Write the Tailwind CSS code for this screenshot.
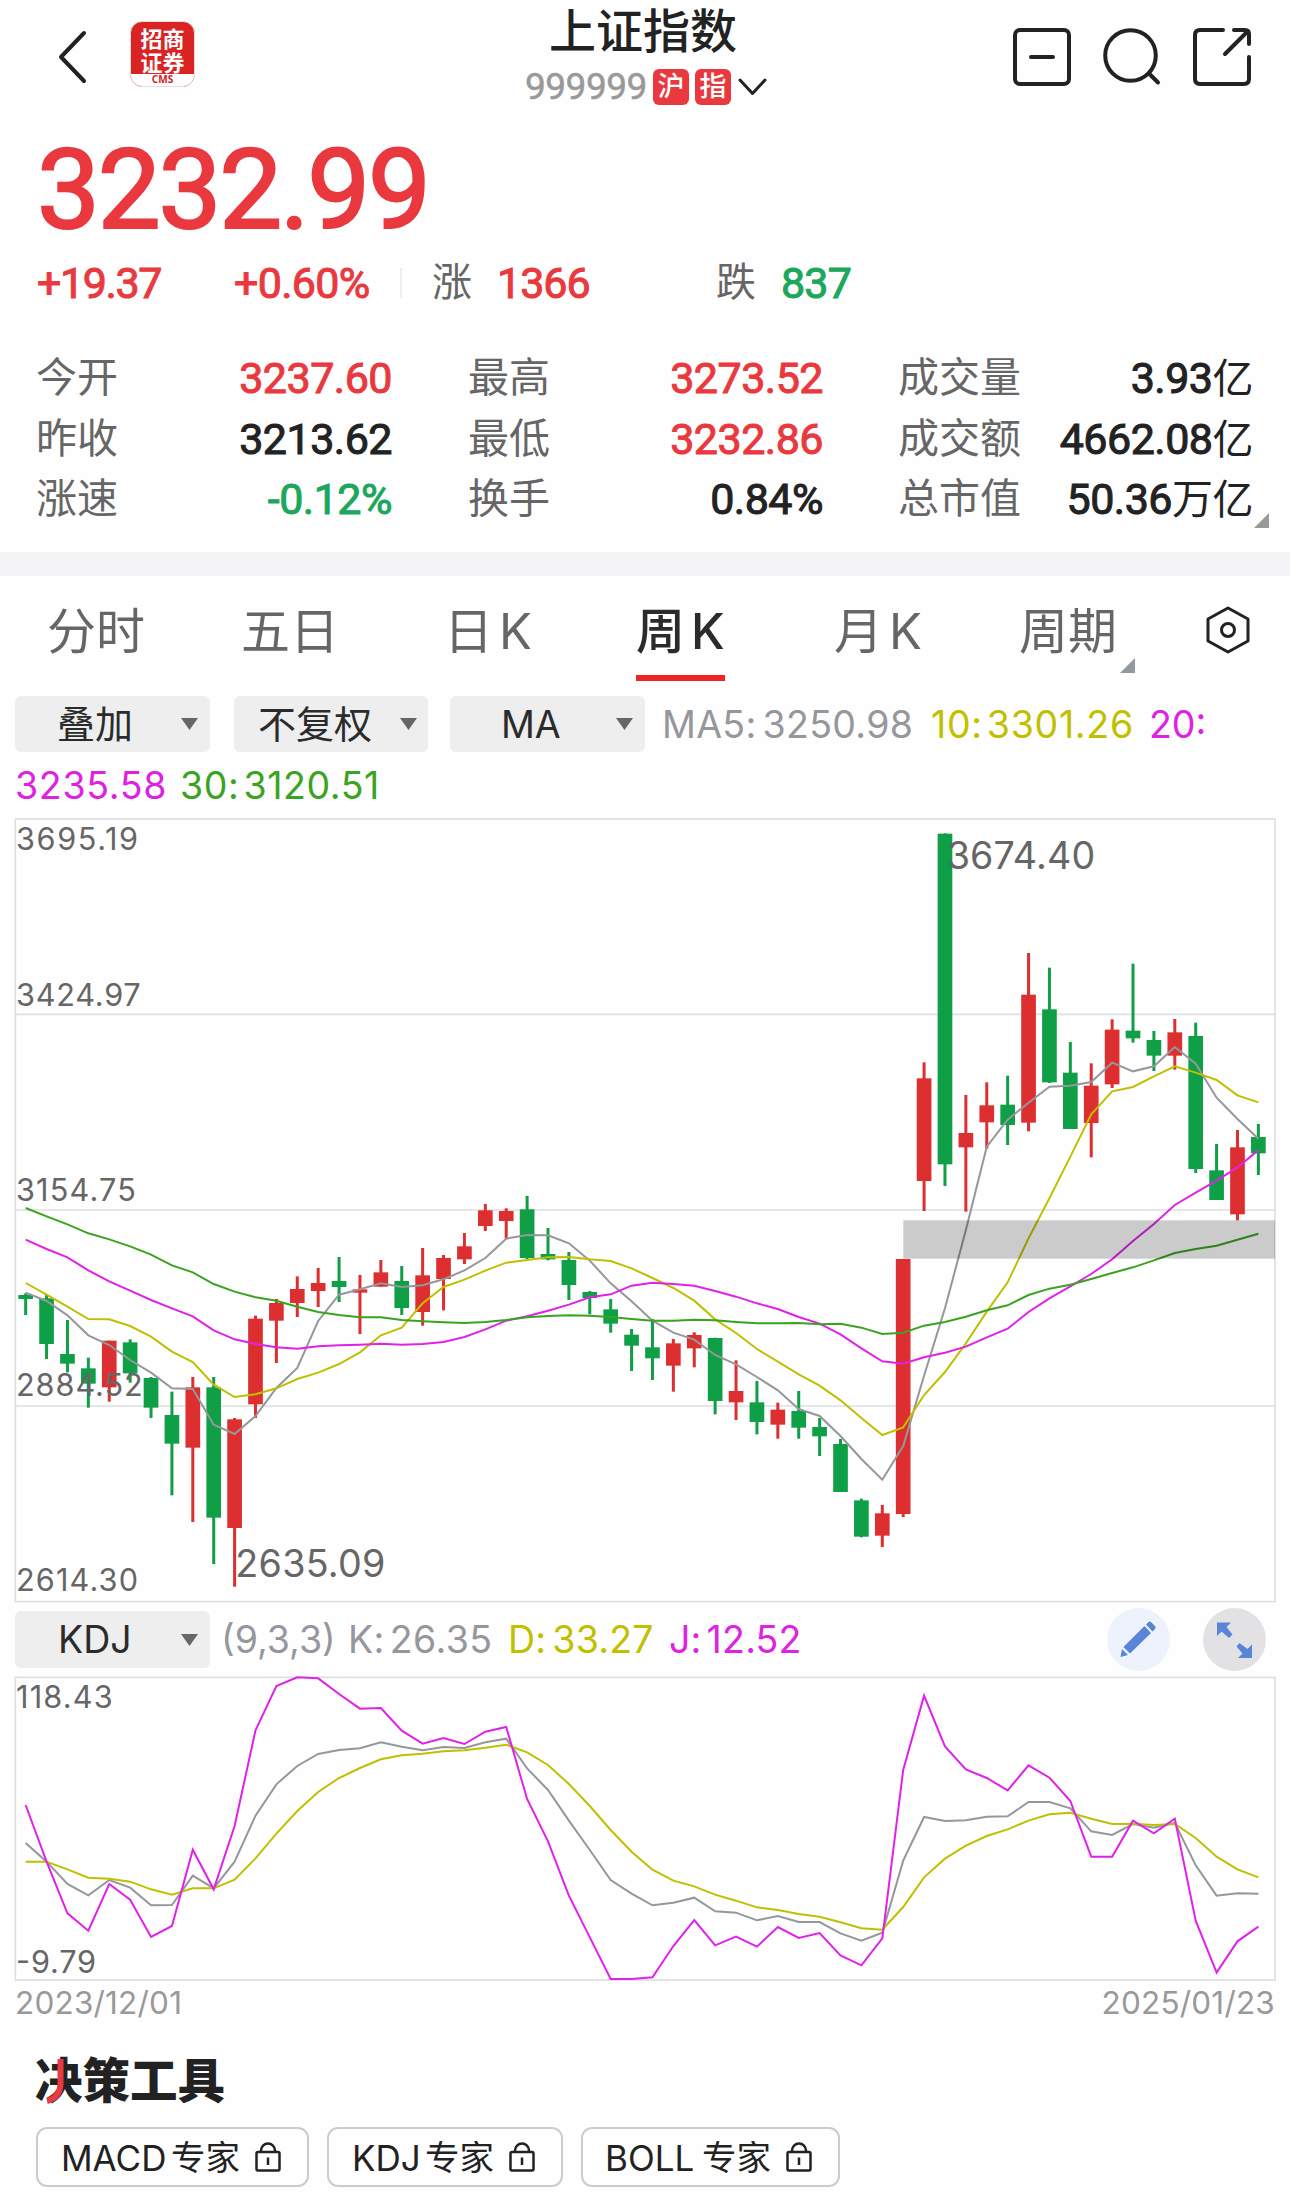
<!DOCTYPE html>
<html lang="zh-CN">
<head>
  <meta charset="UTF-8" />
  <meta name="viewport" content="width=device-width, initial-scale=1.0" />
  <title>上证指数</title>
  <script src="https://cdn.jsdelivr.net/npm/@tailwindcss/browser@4"></script>
</head>
<body class="w-[1290px] h-[2207px] overflow-hidden bg-[#fefefe] text-[#222] font-[Inter,'Noto_Sans_CJK_SC',sans-serif] whitespace-nowrap">

  <!-- Header -->
  <header class="h-[120px] flex items-start">
    <svg class="w-[30px] h-[54px] mt-[30px] ml-[58px]" viewBox="0 0 30 54" fill="none" stroke="#222" stroke-width="4" stroke-linecap="round" stroke-linejoin="round">
      <path d="M26 3 3 27 26 51" />
    </svg>
    <div class="w-[65px] h-[66px] mt-[21px] ml-[42px] rounded-[12px] bg-[#da2323] overflow-hidden border border-[#eadcdc] flex flex-col items-center">
      <div class="h-[53px] pt-[3px] text-[22px] leading-[24px] font-bold text-white font-['Noto_Sans_CJK_SC',sans-serif] text-center">招商<br />证券</div>
      <div class="w-full h-[12px] bg-white text-[#d42020] text-[10px] leading-[10px] font-bold text-center font-['Open_Sans',sans-serif]">CMS</div>
    </div>

    <div class="ml-[330px] w-[250px]">
      <h1 class="pl-[24px] mt-[3px] h-[61px] text-[47px] leading-[56px] font-medium">上证指数</h1>
      <div class="flex items-center h-[46px]">
        <span class="w-[128px] text-[37px] leading-[46px] tracking-[-0.500px] text-[#999] font-[Roboto,sans-serif] [-webkit-text-stroke:0.5px]">999999</span>
        <span class="size-[36px] rounded-[6px] bg-[#e9393e] text-white text-[27px] leading-[35px] text-center font-medium">沪</span>
        <span class="ml-[6px] size-[36px] rounded-[6px] bg-[#e9393e] text-white text-[27px] leading-[35px] text-center font-medium">指</span>
        <svg class="ml-[7px] w-[29px] h-[18px]" viewBox="0 0 29 18" fill="none" stroke="#222" stroke-width="3" stroke-linecap="round" stroke-linejoin="round">
          <path d="M2 2 14.500 15.500 27 2" />
        </svg>
      </div>
    </div>

    <div class="ml-[236px] mt-[26px] flex">
      <svg class="w-[62px] h-[62px]" viewBox="0 0 62 62" fill="none" stroke="#222" stroke-width="4" stroke-linecap="round">
        <rect x="4" y="4" width="54" height="54" rx="5" />
        <path d="M20 31H42" />
      </svg>
      <svg class="ml-[28px] w-[62px] h-[62px]" viewBox="0 0 62 62" fill="none" stroke="#222" stroke-width="4" stroke-linecap="round">
        <circle cx="29.500" cy="29.500" r="25.300" />
        <path d="M48 47.500 57 56.500" />
      </svg>
      <svg class="ml-[28px] w-[62px] h-[62px]" viewBox="0 0 62 62" fill="none" stroke="#222" stroke-width="4" stroke-linecap="round" stroke-linejoin="round">
        <path d="M32 4H9Q4 4 4 9V53Q4 58 9 58H53Q58 58 58 53V31M43 4H54Q58 4 58 8V18M56 6 34 28" />
      </svg>
    </div>
  </header>

  <!-- Quote -->
  <section class="relative h-[432px] font-[Roboto,'Noto_Sans_CJK_SC',sans-serif]">
    <div class="h-[135px] pt-[2px] pl-[37px] text-[112px] leading-[135px] tracking-[-2.200px] text-[#e9393e] [-webkit-text-stroke:2.2px]">3232.99</div>
    <div class="h-[56px] flex items-center text-[43px] leading-[56px]">
      <span class="ml-[37px] w-[197px] tracking-[-1.400px] text-[#e9393e] [-webkit-text-stroke:1px]">+19.37</span>
      <span class="w-[166px] tracking-[-0.700px] text-[#e9393e] [-webkit-text-stroke:1px]">+0.60%</span>
      <span class="w-[2px] h-[30px] bg-[#eee]"></span>
      <span class="ml-[30px] w-[65px] text-[40px] text-[#666]">涨</span>
      <span class="w-[219px] tracking-[-1px] text-[#e9393e] [-webkit-text-stroke:1px]">1366</span>
      <span class="w-[65px] text-[40px] text-[#666]">跌</span>
      <span class="tracking-[-0.800px] text-[#1ba75c] [-webkit-text-stroke:1px]">837</span>
    </div>
    <div id="quotes" class="pt-[37px] pl-[36px] grid grid-cols-[90px_266px_76px_90px_265px_75px_123px_232px] auto-rows-[60.500px] text-[43px] leading-[60px]"></div>
    <svg class="absolute left-[1254px] top-[393px] w-[15px] h-[15px]" viewBox="0 0 15 15"><path d="M15 0V15H0Z" fill="#999" /></svg>
  </section>
  <div class="h-[24px] bg-[#f3f3f5]"></div>

  <!-- Period tabs -->
  <nav class="relative h-[112px] text-[49px] leading-[112px] text-[#666] grid grid-cols-[194px_203px_192px_198px_185px_186px_50px] pl-[47px]">
    <span>分时</span>
    <span>五日</span>
    <span>日<span class="ml-[6px]">K</span></span>
    <span class="text-[#2b2b2b] font-medium">周<span class="ml-[6px]">K</span></span>
    <span>月<span class="ml-[6px]">K</span></span>
    <span>周期</span>
    <svg class="mt-[30px] w-[46px] h-[48px]" viewBox="0 0 46 48" fill="none" stroke="#222" stroke-width="3" stroke-linejoin="round">
      <path d="M23 2 43 13V35L23 46 3 35V13Z" />
      <circle cx="23" cy="24" r="6.500" />
    </svg>
    <i class="absolute left-[636px] top-[99px] w-[89px] h-[6px] bg-[#ec2424]"></i>
    <svg class="absolute left-[1120px] top-[82px] w-[15px] h-[15px]" viewBox="0 0 15 15"><path d="M15 0V15H0Z" fill="#9499a0" /></svg>
  </nav>

  <!-- Moving averages -->
  <div class="h-[130px] pl-[15px] pt-[8px] text-[37.500px]">
    <div class="h-[56px] flex items-center leading-[56px]">
      <div class="w-[195px] h-[56px] rounded-[6px] bg-[#eee] flex items-center pl-[42px] text-[#2b2b2b]">
        <span class="w-[124px] text-[38px]">叠加</span>
        <svg class="w-[17px] h-[12px]" viewBox="0 0 17 12"><path d="M0 0H17L8.500 12Z" fill="#666" /></svg>
      </div>
      <div class="ml-[24px] w-[194px] h-[56px] rounded-[6px] bg-[#eee] flex items-center pl-[24px] text-[#2b2b2b]">
        <span class="w-[142px] text-[38px]">不复权</span>
        <svg class="w-[17px] h-[12px]" viewBox="0 0 17 12"><path d="M0 0H17L8.500 12Z" fill="#666" /></svg>
      </div>
      <div class="ml-[22px] w-[195px] h-[56px] rounded-[6px] bg-[#eee] flex items-center pl-[51px] text-[#2b2b2b]">
        <span class="w-[115px] pt-[1px]">MA</span>
        <svg class="w-[17px] h-[12px]" viewBox="0 0 17 12"><path d="M0 0H17L8.500 12Z" fill="#666" /></svg>
      </div>
      <span class="ml-[17px] w-[269px] pt-[1px] tracking-[0.300px] text-[#96979c]">MA5:<span class="ml-[6px]">3250.98</span></span>
      <span class="w-[218px] pt-[1px] tracking-[0.700px] text-[#c0bf00]">10:<span class="ml-[4px]">3301.26</span></span>
      <span class="pt-[1px] text-[#dd22e4]">20:</span>
    </div>
    <div class="mt-[6px] flex leading-[56px]">
      <span class="w-[165px] tracking-[0.700px] text-[#dd22e4]">3235.58</span>
      <span class="tracking-[0.600px] text-[#3aa320]">30:<span class="ml-[4px]">3120.51</span></span>
    </div>
  </div>

  <!-- Candles -->
  <svg id="kline" class="block w-[1290px] h-[786px]" viewBox="0 -6 3870 2358" fill="none"></svg>

  <!-- KDJ toolbar -->
  <div class="h-[70px] pl-[15px] pt-[4px] flex items-start text-[37.500px] leading-[56px]">
    <div class="mt-[3px] w-[195px] h-[57px] rounded-[6px] bg-[#eee] flex items-center pl-[43px] text-[#2b2b2b]">
      <span class="w-[123px]">KDJ</span>
      <svg class="w-[17px] h-[12px]" viewBox="0 0 17 12"><path d="M0 0H17L8.500 12Z" fill="#666" /></svg>
    </div>
    <div class="mt-[4px] flex">
      <span class="ml-[11px] w-[127px] text-[#96979c]">(9,3,3)</span>
      <span class="w-[160px] tracking-[0.400px] text-[#96979c]">K:<span class="ml-[5px]">26.35</span></span>
      <span class="w-[161px] tracking-[0.200px] text-[#c0bf00]">D:<span class="ml-[6px]">33.27</span></span>
      <span class="w-[438px] tracking-[0.200px] text-[#dd22e4]">J:<span class="ml-[5px]">12.52</span></span>
    </div>
    <svg class="w-[63px] h-[63px]" viewBox="0 0 63 63">
      <circle cx="31.500" cy="31.500" r="31.500" fill="#edf2fc" />
      <path d="M39 16.500 41.500 14Q43 13 44.500 14.500L48 18Q49.500 19.500 48 21L45.500 23.500ZM37.500 18 44 25 23 45.500 16.500 39ZM15 41 21 47 13.500 49Z" fill="#5885d8" />
    </svg>
    <svg class="ml-[33px] w-[63px] h-[63px]" viewBox="0 0 63 63">
      <circle cx="31.500" cy="31.500" r="31.500" fill="#e2e2e4" />
      <path d="M14 14.500H28L23.500 19 29.500 26.500 26 30 18.500 23.500 14 28ZM49 50H35L39.500 45.500 33.500 38.500 36.500 35 44.500 41 49 36.500Z" fill="#5885d8" />
    </svg>
  </div>

  <svg id="kdj" class="block w-[1290px] h-[306px]" viewBox="0 10 3870 918" fill="none" overflow="visible"></svg>

  <div class="h-[52px] pt-[2px] pl-[15px] pr-[15px] flex justify-between text-[31.500px] leading-[42px] text-[#999]">
    <span class="tracking-[0.200px]">2023/12/01</span>
    <span class="tracking-[0.200px]">2025/01/23</span>
  </div>

  <!-- Tools -->
  <section class="relative pt-[15px]">
    <h2 class="pl-[35px] h-[80px] text-[47.500px] leading-[67px] font-black">决策工具</h2>
    <svg class="absolute left-[44px] top-[26px] w-[24px] h-[48px]" viewBox="0 0 24 48" fill="none" stroke="#ea3a40" stroke-width="6">
      <path d="M16.500 1V26Q16 40 3 43" />
    </svg>
    <div class="flex pl-[36px] text-[35px] leading-[56px]">
      <div class="w-[273px] h-[60px] border-2 border-[#ccc] rounded-[11px] flex items-center pl-[23px]">
        <span class="w-[110px] pt-[1px]">MACD</span><span class="w-[84px] pt-[1px] text-[34.500px]">专家</span>
        <svg class="w-[26px] h-[30px]" viewBox="0 0 26 30" fill="none" stroke="#222" stroke-width="2.500"><rect x="1.500" y="10" width="23" height="18.500" rx="1.500" /><path d="M6 10V8.500A7 7 0 0 1 20 8.500V10M13 15.500V23" /></svg>
      </div>
      <div class="ml-[18px] w-[236px] h-[60px] border-2 border-[#ccc] rounded-[11px] flex items-center pl-[23px]">
        <span class="w-[73px] pt-[1px]">KDJ</span><span class="w-[84px] pt-[1px] text-[34.500px]">专家</span>
        <svg class="w-[26px] h-[30px]" viewBox="0 0 26 30" fill="none" stroke="#222" stroke-width="2.500"><rect x="1.500" y="10" width="23" height="18.500" rx="1.500" /><path d="M6 10V8.500A7 7 0 0 1 20 8.500V10M13 15.500V23" /></svg>
      </div>
      <div class="ml-[18px] w-[259px] h-[60px] border-2 border-[#ccc] rounded-[11px] flex items-center pl-[22px]">
        <span class="w-[97px] pt-[1px]">BOLL</span><span class="w-[84px] pt-[1px] text-[34.500px]">专家</span>
        <svg class="w-[26px] h-[30px]" viewBox="0 0 26 30" fill="none" stroke="#222" stroke-width="2.500"><rect x="1.500" y="10" width="23" height="18.500" rx="1.500" /><path d="M6 10V8.500A7 7 0 0 1 20 8.500V10M13 15.500V23" /></svg>
      </div>
    </div>
  </section>

  <script>
    const RED = "text-[#e9393e]", GREEN = "text-[#1ba75c]", BLACK = "text-[#222]";
    const quotes = [
      ["今开", "3237.60", RED], ["最高", "3273.52", RED], ["成交量", "3.93亿", BLACK],
      ["昨收", "3213.62", BLACK], ["最低", "3232.86", RED], ["成交额", "4662.08亿", BLACK],
      ["涨速", "-0.12%", GREEN], ["换手", "0.84%", BLACK], ["总市值", "50.36万亿", BLACK]
    ];
    document.getElementById("quotes").innerHTML = quotes.map(([label, value, color], i) => `
      <span class="text-[41px] text-[#666]">${label}</span>
      <span class="text-right tracking-[-0.500px] [-webkit-text-stroke:1px] ${color}">${value.replace(/[万亿]+/, '<span class="text-[41px] [-webkit-text-stroke:0px]">$&</span>')}</span>
      ${i % 3 < 2 ? "<span></span>" : ""}`).join("");

    // chart units are thirds of a pixel
    const cx = i => 77 + i * 62.68;
    const line = (ys, color) =>
      `<polyline points="${ys.map((y, i) => `${cx(i).toFixed(1)},${y}`).join(" ")}" stroke="${color}" stroke-width="6" />`;
    const label = (x, y, len, text, size = 92) =>
      `<text x="${x}" y="${y}" textLength="${len}" font-size="${size}" fill="#666">${text}</text>`;

    // [top, bottom, high, low, up]
    const candles = [
      [1425,1437,1420,1485,0],[1435,1572,1425,1617,0],[1602,1631,1500,1657,0],[1645,1691,1613,1763,0],[1562,1702,1562,1745,1],
      [1567,1660,1558,1688,0],[1674,1763,1671,1794,0],[1785,1871,1715,2026,0],[1702,1883,1671,2106,1],[1702,2093,1671,2232,0],
      [1798,2124,1794,2300,1],[1496,1753,1487,1794,1],[1449,1502,1437,1629,1],[1407,1449,1369,1491,1],[1389,1413,1344,1461,1],
      [1383,1401,1311,1446,0],[1408,1418,1365,1542,1],[1357,1400,1320,1400,1],[1383,1464,1338,1485,0],[1366,1476,1284,1517,1],
      [1314,1377,1305,1471,1],[1279,1318,1239,1332,1],[1171,1218,1152,1233,1],[1173,1203,1165,1256,1],[1168,1314,1128,1317,0],
      [1302,1318,1224,1321,0],[1320,1395,1296,1440,0],[1416,1434,1413,1483,0],[1468,1511,1437,1538,0],[1544,1577,1527,1653,0],
      [1582,1615,1497,1680,0],[1570,1637,1557,1715,1],[1545,1585,1537,1642,1],[1554,1743,1553,1783,0],[1713,1747,1621,1800,1],
      [1747,1806,1683,1843,0],[1769,1814,1748,1856,1],[1773,1823,1713,1856,0],[1821,1849,1794,1908,0],[1872,2016,1857,2016,0],
      [2041,2150,2036,2152,0],[2080,2147,2055,2181,1],[1317,2082,1317,2091,1],[775,1083,727,1173,1],[41,1033,40,1098,0],
      [939,982,825,1175,1],[856,907,787,986,1],[854,915,767,975,0],[524,908,399,934,1],[568,787,443,789,0],
      [758,927,666,927,0],[797,909,730,1012,1],[629,793,598,804,1],[632,655,431,668,0],[660,707,633,753,0],
      [637,707,597,749,1],[648,1047,608,1059,0],[1051,1140,972,1140,0],[982,1183,930,1201,1],[951,1000,912,1065,0]
    ];
    const ma5 = [1418,1443,1486,1546,1575,1620,1658,1705,1707,1814,1842,1788,1704,1644,1503,1424,1408,1390,1401,1396,1378,1351,1314,1256,1245,1246,1270,1322,1390,1444,1502,1538,1559,1605,1633,1671,1711,1767,1788,1848,1917,1979,1878,1667,1465,1230,980,899,848,800,797,786,728,754,739,681,731,833,897,956];
    const ma10 = [1389,1424,1460,1497,1498,1518,1550,1595,1626,1694,1731,1723,1705,1677,1658,1632,1597,1546,1523,1450,1401,1379,1352,1328,1320,1312,1311,1318,1323,1345,1374,1404,1442,1498,1539,1587,1625,1663,1697,1741,1794,1845,1822,1725,1656,1570,1475,1387,1255,1135,1010,883,814,801,769,739,758,780,826,847];
    const ma20 = [1259,1287,1312,1351,1384,1412,1440,1465,1489,1531,1558,1572,1582,1586,1579,1576,1574,1571,1574,1572,1566,1551,1528,1502,1489,1472,1454,1432,1423,1397,1388,1392,1397,1413,1430,1450,1467,1491,1511,1543,1585,1624,1631,1612,1598,1580,1552,1526,1476,1435,1399,1362,1318,1263,1212,1155,1118,1082,1042,991];
    const ma30 = [1164,1189,1213,1240,1258,1279,1304,1336,1357,1392,1415,1432,1442,1460,1476,1485,1492,1492,1500,1504,1507,1509,1506,1500,1492,1488,1486,1487,1491,1497,1502,1502,1499,1501,1506,1510,1510,1509,1513,1511,1523,1542,1538,1517,1506,1490,1471,1456,1425,1406,1394,1377,1359,1342,1321,1299,1287,1277,1259,1241];

    document.getElementById("kline").innerHTML =
      `<rect x="46" y="-3" width="3779" height="2348" stroke="#dedfe0" stroke-width="5" />` +
      [583, 1170, 1758].map(y => `<path d="M46 ${y}H3825" stroke="#dedfe0" stroke-width="5" />`).join("") +
      candles.map(([top, bottom, high, low, up], i) => {
        const x = cx(i), fill = up ? "#dd2e30" : "#0f9f46";
        return `<rect x="${x - 22}" y="${top}" width="44" height="${bottom - top}" fill="${fill}" />` +
          `<rect x="${x - 4.5}" y="${high}" width="9" height="${low - high}" fill="${fill}" />`;
      }).join("") +
      line(ma5, "#96979c") + line(ma10, "#c0bf00") + line(ma20, "#e022e8") + line(ma30, "#3aa320") +
      `<rect x="2710" y="1201" width="1115" height="115" fill="#000" fill-opacity="0.2" />` +
      label(48, 91, 366, "3695.19") + label(48, 558, 374, "3424.97") + label(48, 1144, 360, "3154.75") +
      label(48, 1729, 380, "2884.52") + label(48, 2314, 366, "2614.30") +
      label(2840, 148, 446, "3674.40", 113) + label(706, 2271, 450, "2635.09", 113);

    const k = [517,573,640,674,628,651,704,703,615,653,573,435,341,286,250,238,233,215,228,239,229,232,215,204,293,358,450,538,628,669,704,696,681,722,726,749,736,754,754,788,810,786,570,439,451,449,438,437,394,394,413,482,493,460,471,457,584,675,668,669];
    const d = [573,573,596,621,624,633,656,672,653,653,627,563,489,421,364,322,292,266,254,249,242,239,231,222,245,283,340,406,478,543,597,630,647,672,690,710,718,730,738,755,773,777,709,620,564,525,496,476,450,431,426,444,460,459,463,460,502,558,596,620];
    const j = [403,573,728,780,640,687,799,766,537,656,466,179,46,20,23,70,114,112,180,219,202,220,183,169,385,512,675,800,925,925,920,826,748,824,798,828,769,802,787,854,884,803,298,75,227,296,322,359,284,321,391,558,558,450,488,444,750,906,812,768];
    document.getElementById("kdj").innerHTML =
      `<rect x="46" y="20" width="3779" height="908" stroke="#dedfe0" stroke-width="5" />` +
      line(k, "#96979c") + line(d, "#c0bf00") + line(j, "#e022e8") +
      label(48, 113, 290, "118.43") + label(48, 907, 240, "-9.79");
  </script>
</body>
</html>
